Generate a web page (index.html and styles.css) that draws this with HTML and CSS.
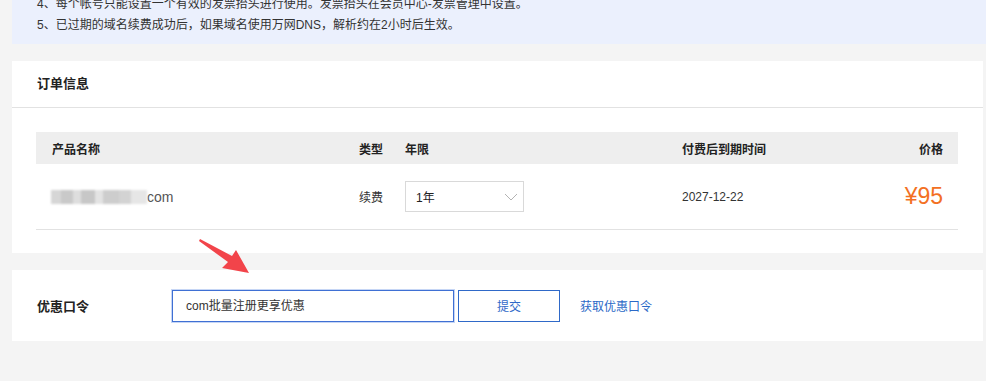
FILE: index.html
```html
<!DOCTYPE html>
<html>
<head>
    <meta charset="utf-8">
    <link rel="stylesheet" href="styles.css">
</head>
<body>

<div class="page">
    <div class="notice">
        <p>4、每个帐号只能设置一个有效的发票抬头进行使用。发票抬头在会员中心-发票管理中设置。</p>
        <p>5、已过期的域名续费成功后，如果域名使用万网DNS，解析约在2小时后生效。</p>
    </div>

    <div class="card">
        <div class="card_title">订单信息</div>
        <div class="card_body">
            <div class="order_row order_head">
                <div>产品名称</div>
                <div>类型</div>
                <div>年限</div>
                <div>付费后到期时间</div>
                <div class="right">价格</div>
            </div>
            <div class="order_row order_item">
                <div class="domain"><span class="blur"></span>com</div>
                <div>续费</div>
                <div>
                    <div class="select">
                        <span>1年</span>
                        <svg width="14" height="8" viewBox="0 0 14 8"><path d="M1 1 L7 7 L13 1" fill="none" stroke="#b3b3b3" stroke-width="1"/></svg>
                    </div>
                </div>
                <div>2027-12-22</div>
                <div class="right price">¥95</div>
            </div>
        </div>
    </div>

    <div class="card coupon">
        <div class="coupon_label">优惠口令</div>
        <div class="coupon_input">com批量注册更享优惠</div>
        <button type="button" class="submit_btn">提交</button>
        <a class="coupon_link" href="#">获取优惠口令</a>
    </div>

    <!-- red arrow pointing to the coupon input -->
    <svg class="arrow" width="60" height="45" viewBox="0 0 60 45">
        <polygon points="5,5 37,22 41,16 54,39 27,34 33,28 4,7" fill="#f2444a"/>
    </svg>
</div>

</body>
</html>
```

FILE: styles.css
```css
body {
    margin: 0;
    background: #f4f4f4;
    font-family: "Liberation Sans", "Noto Sans CJK SC", sans-serif;
    font-size: 12px;
    color: #333333;
}

.page {
    position: relative;
    padding: 0 3px 40px 12px;
}

.notice {
    background: #ebf0fd;
    margin: -6px -3px 0 0;
    padding: 0 25px 8px 25px;
}

.notice p {
    margin: 0;
    line-height: 21px;
    font-size: 12px;
}

.card {
    background: #ffffff;
    margin-top: 17px;
}

.card_title {
    height: 46px;
    line-height: 46px;
    padding-left: 25px;
    font-size: 13px;
    font-weight: bold;
    color: #222222;
    border-bottom: 1px solid #e2e2e2;
}

.card_body {
    padding: 24px 25px 23px 24px;
}

.order_row {
    display: grid;
    grid-template-columns: 323px 46px 277px 1fr 100px;
    align-items: center;
}

.order_row > div:first-child {
    padding-left: 16px;
}

.order_row .right {
    text-align: right;
    padding-right: 15px;
}

.order_head {
    height: 32px;
    background: #eeeeee;
    font-weight: bold;
    color: #222222;
}

.order_item {
    height: 65px;
    border-bottom: 1px solid #e2e2e2;
}

.domain {
    display: flex;
    align-items: center;
    font-size: 14px;
    color: #555555;
}

.blur {
    display: inline-block;
    width: 96px;
    height: 14px;
    margin-left: -1px;
    background: linear-gradient(90deg, #d6d6d6 0, #d6d6d6 10px, #c9c9c9 10px, #c9c9c9 22px, #dedede 22px, #dedede 30px, #c7c7c7 30px, #c7c7c7 44px, #e3e3e3 44px, #e3e3e3 52px, #cdcdcd 52px, #cdcdcd 68px, #d3d3d3 68px, #d3d3d3 80px, #e6e6e6 80px);
    filter: blur(1px);
}

.select {
    width: 102px;
    height: 29px;
    border: 1px solid #d9d9d9;
    display: flex;
    align-items: center;
    justify-content: space-between;
    padding: 0 5px 0 10px;
    color: #222222;
}

.price {
    font-size: 23px;
    color: #f37023;
}

.coupon {
    display: flex;
    align-items: center;
    height: 71px;
    padding-left: 25px;
}

.coupon_label {
    width: 135px;
    font-size: 13px;
    font-weight: bold;
    color: #222222;
}

.coupon_input {
    width: 267px;
    height: 30px;
    line-height: 30px;
    padding-left: 13px;
    border: 1px solid #3f70d4;
    box-shadow: 0 0 0 1px #c6d6f5;
    color: #333333;
}

.submit_btn {
    width: 102px;
    height: 32px;
    margin-left: 4px;
    background: #ffffff;
    border: 1px solid #2f69c8;
    color: #2f69c8;
    font-family: inherit;
    font-size: 12px;
}

.coupon_link {
    margin-left: 20px;
    color: #2b69c7;
    text-decoration: none;
}

.arrow {
    position: absolute;
    left: 195px;
    top: 240px;
}
```
